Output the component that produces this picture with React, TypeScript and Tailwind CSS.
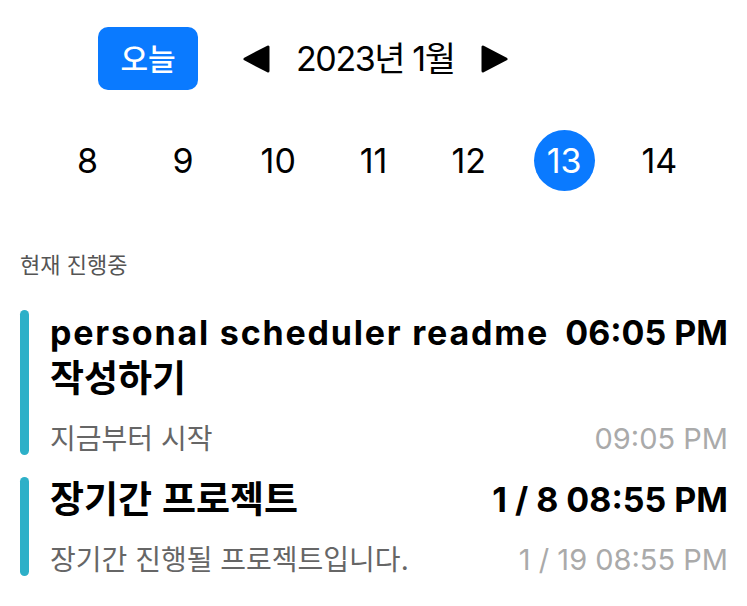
import React from 'react';

const font = { fontFamily: 'Inter, "Noto Sans CJK KR", sans-serif' };

const days = [8, 9, 10, 11, 12, 13, 14];
const selectedDay = 13;

const tasks = [
  {
    title: 'personal scheduler readme 작성하기',
    start: '06:05 PM',
    desc: '지금부터 시작',
    end: '09:05 PM',
  },
  {
    title: '장기간 프로젝트',
    start: '1 / 8 08:55 PM',
    desc: '장기간 진행될 프로젝트입니다.',
    end: '1 / 19 08:55 PM',
  },
];

// hangul glyphs run a bit bigger than latin in the original, so size them apart
const Title = ({ text }: { text: string }) => (
  <>
    {text.split(/([\uac00-\ud7a3]+)/).map((part, i) =>
      /[\uac00-\ud7a3]/.test(part) ? (
        <span key={i} className="text-[37px]">{part}</span>
      ) : (
        <span key={i} className="tracking-[1.8px]">{part}</span>
      )
    )}
  </>
);

const Arrow = ({ dir }: { dir: 'left' | 'right' }) => (
  <svg width="27" height="28" viewBox="0 0 27 28">
    <polygon
      points={dir === 'left' ? '25,2 25,26 2,14' : '2,2 2,26 25,14'}
      fill="#000"
      stroke="#000"
      strokeWidth="3"
      strokeLinejoin="round"
    />
  </svg>
);

const App = () => {
  return (
    <div className="w-[747px] h-[606px] bg-white text-black overflow-hidden" style={font}>
      {/* header */}
      <div className="flex items-center pt-[27px] pl-[98px]">
        <button className="w-[100px] h-[63px] rounded-[10px] bg-[#0a7aff] text-white text-[30px] font-medium leading-none">
          오늘
        </button>
        <div className="flex items-center ml-[45px] gap-[26px]">
          <Arrow dir="left" />
          <span className="text-[34px] leading-none tracking-[-1.4px]">2023년 1월</span>
          <Arrow dir="right" />
        </div>
      </div>

      {/* week row */}
      <div className="grid grid-cols-7 px-[40px] mt-[40px]">
        {days.map(d => (
          <div key={d} className="flex justify-center">
            <div
              className={`w-[61px] h-[61px] rounded-full flex items-center justify-center text-[34px] leading-none ${
                d === selectedDay ? 'bg-[#0a7aff] text-white' : ''
              }`}
            >
              {d}
            </div>
          </div>
        ))}
      </div>

      <div className="mt-[59px] pl-[20px] text-[22px] leading-[30px] text-[#555]">현재 진행중</div>

      {/* tasks */}
      <div className="flex flex-col gap-[20px] mt-[30px] pl-[20px] pr-[19px]">
        {tasks.map(t => (
          <div key={t.title} className="flex gap-[21px]">
            <div className="w-[9px] rounded-full bg-[#2db0c8] mb-[2px]" />
            <div className="flex-1">
              <div className="flex justify-between items-start gap-[10px]">
                <div className="min-w-0 text-[34px] leading-[46px] font-bold break-keep">
                  <Title text={t.title} />
                </div>
                <div className="text-[34px] leading-[46px] font-bold whitespace-nowrap">{t.start}</div>
              </div>
              <div className="flex justify-between items-baseline mt-[18px] leading-[36px]">
                <span className="text-[28px] text-[#666]">{t.desc}</span>
                <span className="text-[29px] text-[#aaa]">{t.end}</span>
              </div>
            </div>
          </div>
        ))}
      </div>
    </div>
  );
};

export default App;
